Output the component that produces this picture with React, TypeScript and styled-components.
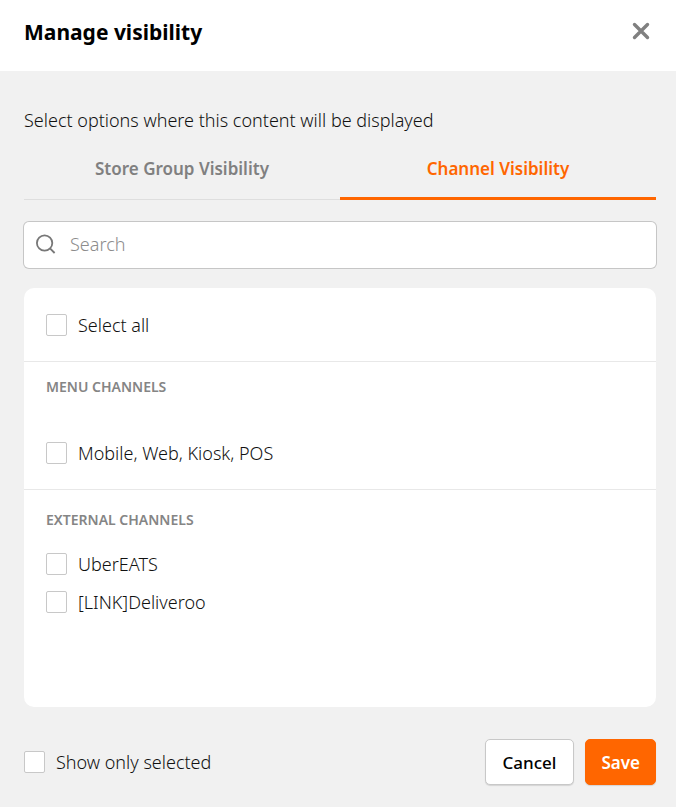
import React, { useState } from "react";
import styled, { createGlobalStyle } from "styled-components";

const GlobalStyle = createGlobalStyle`
  * { box-sizing: border-box; }
  body {
    margin: 0;
    background: #f1f1f1;
    color: #111;
    font-family: "Noto Sans", "Open Sans", sans-serif;
    font-size: 18px;
    font-weight: 300;
    line-height: 24px;
  }
  button, input { font: inherit; }
`;

const Dialog = styled.section`
  display: flex;
  flex-direction: column;
  min-height: 100vh;
`;

const Header = styled.header`
  display: flex;
  align-items: flex-start;
  justify-content: space-between;
  padding: 16px 24px 23px;
  background: #fff;
`;

const Title = styled.h1`
  margin: 0;
  font-size: 21px;
  line-height: 32px;
  font-weight: 700;
  color: #000;
`;

const CloseButton = styled.button`
  display: flex;
  padding: 4px 0;
  border: 0;
  background: none;
  cursor: pointer;
`;

const Body = styled.div`
  display: flex;
  flex: 1;
  flex-direction: column;
  padding: 37px 20px 0 24px;
`;

const Intro = styled.p`
  margin: 0;
`;

const Tabs = styled.div`
  display: grid;
  grid-template-columns: 1fr 1fr;
  margin-top: 16px;
  box-shadow: inset 0 -1px #dedede;
`;

const Tab = styled.button<{ $active: boolean }>`
  height: 52px;
  padding: 0 0 8px;
  border: 0;
  border-bottom: 3px solid ${(p) => (p.$active ? "#ff6600" : "transparent")};
  background: none;
  color: ${(p) => (p.$active ? "#ff6600" : "#808080")};
  font-size: 17px;
  font-weight: 600;
  cursor: pointer;
`;

const SearchBox = styled.label`
  display: flex;
  align-items: center;
  gap: 14px;
  height: 46px;
  margin: 22px 0 20px;
  padding: 0 12px 3px;
  border-radius: 5px;
  background: #fff;
  box-shadow: 0 0 0 1px #c6c6c6;
`;

const SearchInput = styled.input`
  flex: 1;
  min-width: 0;
  padding: 0;
  border: 0;
  outline: 0;
  background: none;
  &::placeholder { color: #8c8c8c; opacity: 1; }
`;

const Panel = styled.div`
  min-height: 419px;
  border-radius: 10px;
  background: #fff;
`;

const Group = styled.section<{ $above: number; $below: number }>`
  padding: ${(p) => p.$above}px 22px ${(p) => p.$below}px;
  & + & { border-top: 1px solid #e8e8e8; }
`;

const GroupTitle = styled.h2<{ $below: number }>`
  margin: 0 0 ${(p) => p.$below}px;
  font-size: 14px;
  line-height: 24px;
  font-weight: 600;
  color: #858585;
`;

const Options = styled.div`
  display: flex;
  flex-direction: column;
  gap: 14px;
`;

const Option = styled.label`
  display: flex;
  align-items: center;
  gap: 11px;
  cursor: pointer;
`;

const Checkbox = styled.input`
  flex: none;
  appearance: none;
  width: 21px;
  height: 22px;
  margin: 0;
  border: 1px solid #c8c8c8;
  border-radius: 2px;
  background: #fff;
  cursor: pointer;
  &:checked { background: #ff6600; border-color: #ff6600; }
`;

const Footer = styled.footer`
  display: flex;
  align-items: center;
  justify-content: space-between;
  padding: 32px 0 20px;
`;

const Actions = styled.div`
  display: flex;
  gap: 11px;
`;

const Button = styled.button<{ $primary?: boolean }>`
  height: 46px;
  padding: 1px ${(p) => (p.$primary ? 15 : 17)}px 0;
  border: 1px solid ${(p) => (p.$primary ? "#ff6600" : "#c8c8c8")};
  border-radius: 5px;
  background: ${(p) => (p.$primary ? "#ff6600" : "#fff")};
  box-shadow: 0 1px 1px rgba(0, 0, 0, 0.12);
  color: ${(p) => (p.$primary ? "#fff" : "#000")};
  font-size: 17px;
  font-weight: ${(p) => (p.$primary ? 600 : 500)};
  cursor: pointer;
`;

const Check = ({ label }: { label: string }) => (
  <Option>
    <Checkbox type="checkbox" />
    {label}
  </Option>
);

const tabs = ["Store Group Visibility", "Channel Visibility"];

export default function App() {
  const [active, setActive] = useState(1);
  return (
    <>
      <GlobalStyle />
      <Dialog role="dialog" aria-labelledby="title">
        <Header>
          <Title id="title">Manage visibility</Title>
          <CloseButton type="button" aria-label="Close">
            <svg width="22" height="22" viewBox="0 0 22 22" fill="none" stroke="#808080" strokeWidth="3.4" strokeLinecap="round">
              <path d="M4.5 4.5l13 13M17.5 4.5l-13 13" />
            </svg>
          </CloseButton>
        </Header>
        <Body>
          <Intro>Select options where this content will be displayed</Intro>
          <Tabs role="tablist">
            {tabs.map((name, i) => (
              <Tab
                key={name}
                type="button"
                role="tab"
                aria-selected={i === active}
                $active={i === active}
                onClick={() => setActive(i)}
              >
                {name}
              </Tab>
            ))}
          </Tabs>
          <SearchBox>
            <svg width="20" height="20" viewBox="0 0 20 20" fill="none" stroke="#777" strokeWidth="1.8">
              <circle cx="8.6" cy="9" r="7.7" />
              <path d="M14 14.4l4.6 4.6" />
            </svg>
            <SearchInput type="text" placeholder="Search" aria-label="Search" />
          </SearchBox>
          <Panel>
            <Group $above={25} $below={24}>
              <Check label="Select all" />
            </Group>
            <Group $above={13} $below={24}>
              <GroupTitle $below={42}>MENU CHANNELS</GroupTitle>
              <Check label="Mobile, Web, Kiosk, POS" />
            </Group>
            <Group $above={18} $below={24}>
              <GroupTitle $below={20}>EXTERNAL CHANNELS</GroupTitle>
              <Options>
                <Check label="UberEATS" />
                <Check label="[LINK]Deliveroo" />
              </Options>
            </Group>
          </Panel>
          <Footer>
            <Check label="Show only selected" />
            <Actions>
              <Button type="button">Cancel</Button>
              <Button type="button" $primary>Save</Button>
            </Actions>
          </Footer>
        </Body>
      </Dialog>
    </>
  );
}
